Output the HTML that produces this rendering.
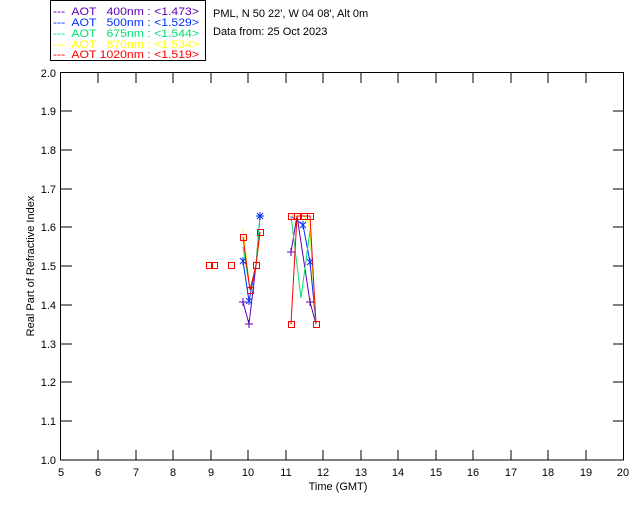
<!DOCTYPE html><html><head><style>
body{margin:0;background:#fff;width:640px;height:512px;overflow:hidden;font-family:"Liberation Sans",sans-serif}
svg text{font-family:"Liberation Sans",sans-serif;font-size:11px;white-space:pre}
</style></head><body>
<svg width="640" height="512" xmlns="http://www.w3.org/2000/svg" xml:space="preserve">
<rect x="50.5" y="0.5" width="155" height="60" fill="none" stroke="#000"/>
<g font-size="11">
<text x="53" y="15" fill="#6000b0" textLength="146" lengthAdjust="spacingAndGlyphs">---  AOT   400nm : &lt;1.473&gt;</text>
<text x="53" y="26" fill="#0030ff" textLength="146" lengthAdjust="spacingAndGlyphs">---  AOT   500nm : &lt;1.529&gt;</text>
<text x="53" y="37" fill="#00e070" textLength="146" lengthAdjust="spacingAndGlyphs">---  AOT   675nm : &lt;1.544&gt;</text>
<text x="53" y="48" fill="#ffff00" textLength="146" lengthAdjust="spacingAndGlyphs">---  AOT   870nm : &lt;1.534&gt;</text>
<text x="53" y="58" fill="#ff0000" textLength="146" lengthAdjust="spacingAndGlyphs">---  AOT 1020nm : &lt;1.519&gt;</text>
<text x="213" y="17" fill="#000">PML, N 50 22', W 04 08', Alt 0m</text>
<text x="213" y="35" fill="#000">Data from: 25 Oct 2023</text>
</g>
<rect x="60.5" y="72.5" width="563" height="387.5" fill="none" stroke="#000"/>
<g stroke="#000">
<path d="M98 460v-10M136 460v-10M173 460v-10M211 460v-10M248 460v-10M286 460v-10M323 460v-10M361 460v-10M398 460v-10M436 460v-10M473 460v-10M511 460v-10M548 460v-10M586 460v-10
M98 73v10M136 73v10M173 73v10M211 73v10M248 73v10M286 73v10M323 73v10M361 73v10M398 73v10M436 73v10M473 73v10M511 73v10M548 73v10M586 73v10
M61 421h11M61 382h11M61 344h11M61 305h11M61 266h11M61 227h11M61 189h11M61 150h11M61 111h11
M624 421h-11M624 382h-11M624 344h-11M624 305h-11M624 266h-11M624 227h-11M624 189h-11M624 150h-11M624 111h-11"/>
</g>
<g font-size="10" fill="#000" text-anchor="end">
<text x="56" y="464">1.0</text><text x="56" y="425">1.1</text><text x="56" y="386">1.2</text><text x="56" y="348">1.3</text><text x="56" y="309">1.4</text><text x="56" y="270">1.5</text><text x="56" y="231">1.6</text><text x="56" y="193">1.7</text><text x="56" y="154">1.8</text><text x="56" y="115">1.9</text><text x="56" y="77">2.0</text>
</g>
<g font-size="10" fill="#000" text-anchor="middle">
<text x="61" y="476">5</text><text x="98" y="476">6</text><text x="136" y="476">7</text><text x="173" y="476">8</text><text x="211" y="476">9</text><text x="248" y="476">10</text><text x="286" y="476">11</text><text x="323" y="476">12</text><text x="361" y="476">13</text><text x="398" y="476">14</text><text x="436" y="476">15</text><text x="473" y="476">16</text><text x="511" y="476">17</text><text x="548" y="476">18</text><text x="586" y="476">19</text><text x="623" y="476">20</text>
<text x="338" y="490">Time (GMT)</text>
<text transform="translate(34 266) rotate(-90)">Real Part of Refractive Index</text>
</g>
<g fill="none" stroke-width="1">
<polyline stroke="#6000b0" points="243,302 249,324 256,265 260,232"/>
<polyline stroke="#6000b0" points="291,252 297,216 310,302 316,324"/>
<polyline stroke="#0030ff" points="243,261 249,301 256,265 260,216"/>
<polyline stroke="#0030ff" points="291,216 303,225 310,262 316,324"/>
<polyline stroke="#00e070" points="243,247 250,290 256,265 260,216"/>
<polyline stroke="#00e070" points="291,216 301,298 310,230 316,324"/>
<polyline stroke="#ffff00" points="243,229 250,290 256,265 260,236"/>
<polyline stroke="#ffff00" points="291,216 304,216 310,228 316,324"/>
<polyline stroke="#ff0000" points="243,237 250,290 256,265 260,232"/>
<polyline stroke="#ff0000" points="291,324 297,216 310,216 316,324"/>
</g>
<g fill="none" stroke="#ff0000">
<rect x="206.5" y="262.5" width="6" height="6"/><rect x="211.5" y="262.5" width="6" height="6"/><rect x="228.5" y="262.5" width="6" height="6"/>
<rect x="240.5" y="234.5" width="6" height="6"/><rect x="257.5" y="229.5" width="6" height="6"/><rect x="253.5" y="262.5" width="6" height="6"/><rect x="247.5" y="287.5" width="6" height="6"/>
<rect x="288.5" y="213.5" width="6" height="6"/><rect x="294.5" y="213.5" width="6" height="6"/><rect x="301.5" y="213.5" width="6" height="6"/><rect x="307.5" y="213.5" width="6" height="6"/>
<rect x="288.5" y="321.5" width="6" height="6"/><rect x="313.5" y="321.5" width="6" height="6"/>
</g>
<g stroke="#0030ff">
<path d="M257 213l6 6M263 213l-6 6M260 212v8M256 216h8M240 258l6 6M246 258l-6 6M243 257v8M246 298l6 6M252 298l-6 6M249 297v8M300 222l6 6M306 222l-6 6M303 221v8M307 259l6 6M313 259l-6 6M310 258v8"/>
</g>
<g stroke="#6000b0"><path d="M239 302h8M243 298v8M245 324h8M249 320v8M287 252h8M291 248v8M306 302h8M310 298v8"/></g>
</svg>
</body></html>
